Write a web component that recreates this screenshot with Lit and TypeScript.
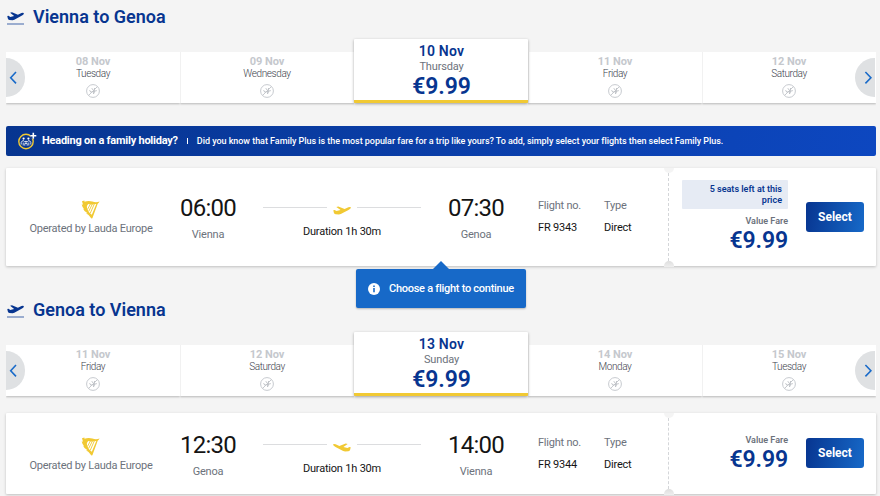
import { LitElement, html, css, svg, nothing } from "lit";
import { customElement, property } from "lit/decorators.js";

const PLANE = svg`<path d="M.3 4.3 1.6 4 3.5 5.1 7.6 4.1 3.3.9 5.3.4 11.6 2.9 15.4 1.3Q17.7.6 18 1.6 17.8 2.9 15.5 3.9L7.8 7.9 5.9 8.5 2.6 8.2Q1.1 8 .8 6.4Z"/>`;

interface Day { date: string; name: string; price?: string }
interface Flight {
  from: string; to: string; dep: string; arr: string; no: string; note?: string; landing?: boolean;
}

@customElement("day-strip")
export class DayStrip extends LitElement {
  @property({ attribute: false }) days: Day[] = [];

  static styles = css`
    :host { display: block; position: relative; height: 64px; }
    .row { display: grid; grid-template-columns: repeat(5, 174px); align-items: end; height: 64px; }
    .day { box-sizing: border-box; height: 51px; background: #fff; border-left: 1px solid #f1f1f1;
      display: flex; flex-direction: column; align-items: center; padding: 3px 1px 0 0;
      box-shadow: 0 1px 2px rgba(0,0,0,.25); clip-path: inset(0 0 -6px 0); }
    .day:first-child { border-left-color: #fff; }
    .date { font: 700 11px/13px Roboto, sans-serif; color: #c5c8cd; letter-spacing: -.05px; }
    .name { font: 300 10px/12px Roboto, sans-serif; color: #3c424c; letter-spacing: -.4px; }
    .none { width: 14px; height: 14px; margin-top: 4px; }
    .on { height: 64px; border-bottom: 3.5px solid #f1c933; padding: 3px 0 0 1px; z-index: 1;
      clip-path: none; box-shadow: 0 1px 3px rgba(0,0,0,.35); border-radius: 1px; border-left: 0; }
    .on .date { font: 600 14px/18px Roboto, sans-serif; color: #073590; letter-spacing: .25px; }
    .on .name { font: 400 11px/13px Roboto, sans-serif; color: #6c727c; letter-spacing: -.15px; }
    .price { font: 600 23px/26px Roboto, sans-serif; color: #073590; padding-top: 1px; letter-spacing: -.1px; }
    .arrow { position: absolute; z-index: 2; top: 19px; width: 19px; height: 39px; background: #dfe1e3; }
    .prev { left: 0; border-radius: 0 20px 20px 0; }
    .next { right: 1px; width: 20px; border-radius: 20px 0 0 20px; }
    .arrow svg { display: block; width: 19px; height: 39px; fill: none; stroke: #1a6bc9; stroke-width: 1.6; }
  `;

  render() {
    return html`
      <div class="row">${this.days.map(d => html`
        <div class="day ${d.price ? "on" : ""}">
          <div class="date">${d.date}</div>
          <div class="name">${d.name}</div>
          ${d.price ? html`<div class="price">${d.price}</div>` : html`
            <svg class="none" viewBox="0 0 14 14" fill="none" stroke="#c1c4c9">
              <circle cx="7" cy="7" r="6.4" stroke-width=".9"/>
              <path d="M2.6 11.4 11.4 2.6" stroke-width=".9"/>
              <path d="M3.6 6.2 4.8 8.2 10.8 6.6M5.8 4.2 8 7.2 7.4 10M8.6 4 8 9.4" stroke-width="1"/>
            </svg>`}
        </div>`)}
      </div>
      <div class="arrow prev"><svg viewBox="0 0 19 39"><path d="M10 14 4.7 19.7 10 25.4"/></svg></div>
      <div class="arrow next"><svg viewBox="0 0 19 39"><path d="M10.4 14 15.9 19.7 10.4 25.4"/></svg></div>`;
  }
}

@customElement("flight-card")
export class FlightCard extends LitElement {
  @property({ attribute: false }) flight!: Flight;

  static styles = css`
    :host { display: block; font-family: Roboto, sans-serif; }
    .card { position: relative; height: 81px; background: #fff; box-shadow: 0 1px 3px rgba(0,0,0,.22);
      border-radius: 1px; display: grid; grid-template-columns: 170px 64px 204px 64px 96px 64px 120px 1fr;
      box-sizing: border-box; --lift: -8px; }
    .tall { height: 98px; --lift: 0px; }
    .col { display: flex; flex-direction: column; align-items: center; text-align: center; white-space: nowrap;
      padding-top: calc(26px + var(--lift)); }
    .brand { padding-top: calc(32px + var(--lift)); }
    .harp { width: 19px; height: 19px; fill: #f1c933; margin-right: 2px; }
    .muted { font-size: 11px; line-height: 14px; color: #6c727c; letter-spacing: -.22px; }
    .brand .muted { margin-top: 3px; }
    .time { font-size: 24px; line-height: 28px; color: #141414; font-weight: 400; letter-spacing: -.8px; }
    .city { margin-top: 6px; }
    .path { padding-top: calc(36px + var(--lift)); }
    .line { display: flex; align-items: center; gap: 6px; height: 12px; }
    .rule { width: 64px; height: 1px; background: #dcdddf; margin-bottom: 5px; }
    .plane { width: 18px; height: 9px; fill: #f1c933; }
    .flip { transform: scaleX(-1); }
    .dark { font-size: 11px; line-height: 14px; color: #141414; letter-spacing: -.2px; }
    .path .dark { margin-top: 9px; }
    .info { align-items: flex-start; padding-top: calc(31px + var(--lift)); }
    .number { padding-left: 30px; }
    .info .dark { margin-top: 8px; }
    .fare { align-items: flex-end; padding-top: 20px; }
    .tall .fare { padding-top: 12px; }
    .tag { box-sizing: border-box; width: 106px; height: 29px; background: #e6ebf4; color: #073590; border-radius: 1px;
      font: 600 9px/11px Roboto, sans-serif; text-align: right; white-space: normal; padding: 4px 6px 0 24px; margin-bottom: 5px; }
    .value { font: 600 9px/14px Roboto, sans-serif; color: #6c727c; }
    .price { font: 600 23px/24px Roboto, sans-serif; color: #073590; padding-top: 1px; letter-spacing: -.1px; }
    .select { justify-self: start; margin: 25px 0 0 18px; width: 58px; height: 30px; border: 0; border-radius: 3px; padding: 0;
      color: #fff; font: 700 12px/30px Roboto, sans-serif; background: linear-gradient(100deg, #073590, #1769c8); }
    .tall .select { margin-top: 34px; }
    .cut { position: absolute; left: 662px; top: 5px; bottom: 5px; width: 0; border-left: 1px dashed #d4d6d9; }
    .notch { position: absolute; left: 658px; width: 10px; height: 5px; background: #f4f4f4; }
    .top { top: 0; border-radius: 0 0 5px 5px; }
    .bottom { bottom: -1px; height: 6px; border-radius: 5px 5px 0 0; background: linear-gradient(#dedede, #eeeeee); }
  `;

  render() {
    const f = this.flight;
    return html`<div class="card ${f.note ? "tall" : ""}">
      <div class="col brand">
        <svg class="harp" viewBox="0 0 19 19">
          <path d="M1 1.2 3.4.5 3.5 1.8Q7.5.3 11.3 1.6 15 2.8 18.6 1.6 17.8 3.2 16.7 3.8L11.4 18.3 10.4 18.4Q8.5 14.9 5 13.2L6.6 13.2Q3 11.6 2 8.5L3.2 9Q1 6.8.7 4.2L2 4.7ZM7.2 4.1Q5.2 6 6 8.4 7 11.7 10.8 14.8L15.3 4Q10.5 4.7 7.2 4.1Z"/>
          <path d="M9.4 4 6.4 9.5M11.4 4 7.7 11.4M13.3 4 9.3 13.1" fill="none" stroke="#f1c933" stroke-width=".9"/>
        </svg>
        <div class="muted">Operated by Lauda Europe</div>
      </div>
      <div class="col"><div class="time">${f.dep}</div><div class="muted city">${f.from}</div></div>
      <div class="col path">
        <div class="line"><span class="rule"></span>
          <svg class="plane ${f.landing ? "flip" : ""}" viewBox="0 0 18 9">${PLANE}</svg>
          <span class="rule"></span></div>
        <div class="dark">Duration 1h 30m</div>
      </div>
      <div class="col"><div class="time">${f.arr}</div><div class="muted city">${f.to}</div></div>
      <div class="col info number"><div class="muted">Flight no.</div><div class="dark">${f.no}</div></div>
      <div class="col info"><div class="muted">Type</div><div class="dark">Direct</div></div>
      <div class="col fare">
        ${f.note ? html`<div class="tag">${f.note}</div>` : nothing}
        <div class="value">Value Fare</div><div class="price">€9.99</div>
      </div>
      <button class="select">Select</button>
      <div class="cut"></div><div class="notch top"></div><div class="notch bottom"></div>
    </div>`;
  }
}

@customElement("app-root")
export class AppRoot extends LitElement {
  static styles = css`
    :host { display: block; box-sizing: border-box; width: 880px; height: 496px; overflow: hidden; background: #f4f4f4;
      font-family: Roboto, sans-serif; padding: 0 4px 0 6px; }
    .heading { display: flex; align-items: center; gap: 9px; height: 33px; padding-left: 1px; margin-bottom: 6px;
      font: 600 18px/33px Roboto, sans-serif; color: #073590; }
    .takeoff { width: 17px; height: 14px; margin-top: 2px; fill: #073590; }
    .banner { display: flex; align-items: center; height: 30px; margin: 23px 0 12px; border-radius: 2px; color: #fff;
      background: linear-gradient(100deg, #073590, #0d47c0); font: 500 9px/30px Roboto, sans-serif; white-space: nowrap;
      letter-spacing: -.04px; }
    .family { width: 19px; height: 18px; margin: 0 5px 0 12px; fill: none; }
    .lead { font: 700 11px/30px Roboto, sans-serif; letter-spacing: -.23px; }
    .bar { width: 1px; height: 6px; background: #fff; margin: 0 9px; }
    .wrap { position: relative; }
    .tip { position: absolute; z-index: 3; left: 350px; top: 101px; width: 170px; height: 39px; box-sizing: border-box;
      display: flex; align-items: center; gap: 9px; padding: 1px 0 0 12px; border-radius: 2px; background: #1769c8; color: #fff;
      font: 500 11px/14px Roboto, sans-serif; box-shadow: 0 1px 2px rgba(0,0,0,.25); white-space: nowrap; letter-spacing: -.27px; }
    .tip::before { content: ""; position: absolute; left: 77px; top: -8px; border: 8px solid transparent; border-top: 0;
      border-bottom-color: #1769c8; }
    .info { width: 12px; height: 12px; }
    .second { margin-top: 27px; }
    .gap { height: 17px; }
  `;

  heading(text: string, cls = "") {
    return html`<div class="heading ${cls}">
      <svg class="takeoff" viewBox="0 0 17 14"><g transform="translate(0 .8) scale(.94 1)">${PLANE}</g>
        <path d="M0 12.5h17v1H0z" opacity=".75"/></svg><span>${text}</span></div>`;
  }

  render() {
    return html`
      ${this.heading("Vienna to Genoa")}
      <day-strip .days=${[
        { date: "08 Nov", name: "Tuesday" }, { date: "09 Nov", name: "Wednesday" },
        { date: "10 Nov", name: "Thursday", price: "€9.99" },
        { date: "11 Nov", name: "Friday" }, { date: "12 Nov", name: "Saturday" }]}></day-strip>
      <div class="banner">
        <svg class="family" viewBox="0 0 19 18">
          <circle cx="8" cy="9.5" r="7.2" stroke="#f1c933" stroke-width="1.4"/>
          <path d="M15.3.8v6M12.3 3.8h6" stroke="#073590" stroke-width="4"/>
          <path d="M15.3.8v6M12.3 3.8h6" stroke="#fff" stroke-width="1.6"/>
          <g fill="#fff"><circle cx="5.6" cy="6.6" r="1.1"/><circle cx="10.4" cy="6.6" r="1.1"/><circle cx="8" cy="9.6" r=".9"/></g>
          <path d="M3.2 12.5V10.4q.5-1.8 2.4-1.8L7 10.4M12.8 12.5V10.4q-.5-1.8-2.4-1.8L9 10.4M5.2 10.5v3M10.8 10.5v3M6.8 13.7v-2.2h2.4v2.2" stroke="#fff" stroke-width=".8"/>
        </svg>
        <span class="lead">Heading on a family holiday?</span><span class="bar"></span>
        <span>Did you know that Family Plus is the most popular fare for a trip like yours? To add, simply select your flights then select Family Plus.</span>
      </div>
      <div class="wrap">
        <flight-card .flight=${{ from: "Vienna", to: "Genoa", dep: "06:00", arr: "07:30", no: "FR 9343", note: "5 seats left at this price" }}></flight-card>
        <div class="tip"><svg class="info" viewBox="0 0 12 12"><circle cx="6" cy="6" r="6" fill="#fff"/>
          <path d="M5.2 2.6h1.6v1.5H5.2zM5.2 5h1.6v4.3H5.2z" fill="#1769c8"/></svg><span>Choose a flight to continue</span></div>
      </div>
      ${this.heading("Genoa to Vienna", "second")}
      <day-strip .days=${[
        { date: "11 Nov", name: "Friday" }, { date: "12 Nov", name: "Saturday" },
        { date: "13 Nov", name: "Sunday", price: "€9.99" },
        { date: "14 Nov", name: "Monday" }, { date: "15 Nov", name: "Tuesday" }]}></day-strip>
      <div class="gap"></div>
      <flight-card .flight=${{ from: "Genoa", to: "Vienna", dep: "12:30", arr: "14:00", no: "FR 9344", landing: true }}></flight-card>`;
  }
}
